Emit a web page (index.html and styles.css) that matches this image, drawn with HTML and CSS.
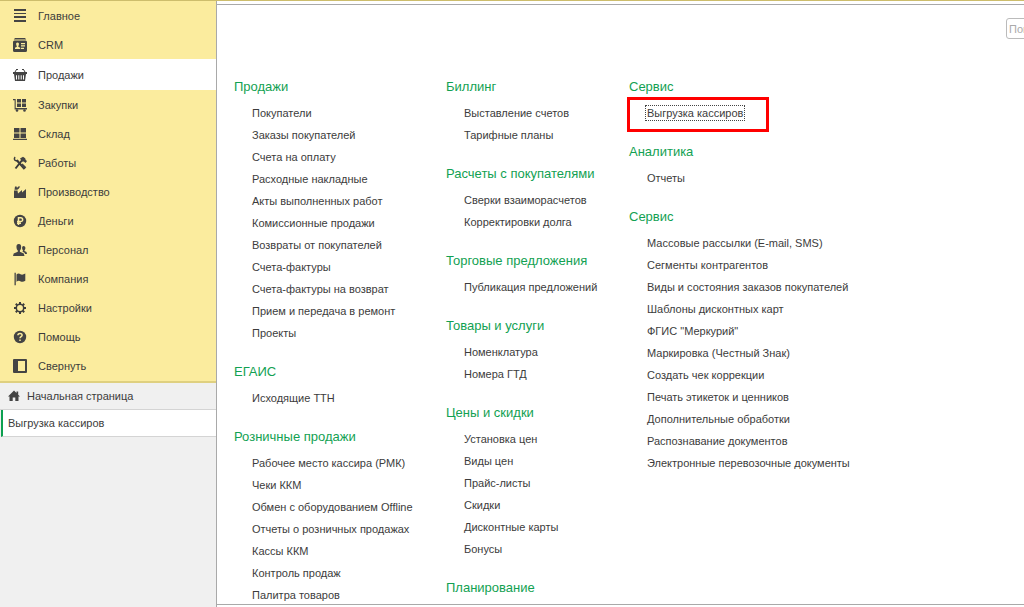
FILE: index.html
```html
<!DOCTYPE html>
<html lang="ru">
<head>
    <meta charset="UTF-8">
    <meta name="viewport" content="width=device-width, initial-scale=1.0">
    <title>Продажи</title>
    <link rel="stylesheet" href="styles.css">
</head>
<body>

    <aside class="sidebar">
        <nav class="sections">
            <a href="#" class="section">
                <svg class="icon" viewBox="0 0 14 14"><path d="M1 0h12v2H1zM1 4h12v1H1zM1 7h12v2H1zM1 11h12v2H1z"/></svg>
                Главное
            </a>
            <a href="#" class="section">
                <svg class="icon" viewBox="0 0 14 14"><path d="M2 0h10l1.200 1.600H.8z"/><path fill-rule="evenodd" d="M1.5 2.4h11Q14 2.4 14 4v8.5q0 1.5-1.5 1.5h-11Q0 14 0 12.5V4q0-1.6 1.5-1.6zM4.5 4.5C3.3 4.5 3 5.4 3.2 6.5c.1.8.4 1.200.6 1.500v.8L2 9.700V11h5.200V9.700L5.300 8.800V8c.3-.3.5-.7.6-1.500.2-1.100-.2-2-1.400-2zM8 5v1.200h4V5zM8 7.300v1.200h4V7.300zM8 9.700v1.200h3V9.700z"/></svg>
                CRM
            </a>
            <a href="#" class="section active">
                <svg class="icon" viewBox="0 0 14 14"><path d="M3.5 1.5 2 4M10.5 1.5 12 4" fill="none" stroke="currentColor"/><path d="M3 1h2v1H3zM9 1h2v1H9z"/><path d="M0 4h14v2H0z"/><path fill-rule="evenodd" d="M1 6h12l-1 7H2zM3 7.200v4.300h1V7.200zM5.300 7.200v4.300h1V7.200zM7.700 7.200v4.300h1V7.200zM10 7.200v4.300h1V7.200z"/></svg>
                Продажи
            </a>
            <a href="#" class="section">
                <svg class="icon" viewBox="0 0 14 14"><path d="M0 1h2.700v9H14v1.500H1.600V2.200H0z"/><path d="M4 1h4v3.600H4zM9 1h4v3.600H9zM4 5.500h4v3.600H4zM9 5.500h4v3.600H9z"/><circle cx="4" cy="12.5" r="1.300"/><circle cx="11.5" cy="12.5" r="1.300"/></svg>
                Закупки
            </a>
            <a href="#" class="section">
                <svg class="icon" viewBox="0 0 14 14"><path d="M1 1h5.500v4.500H1zM7.500 1H13v4.500H7.500zM1 6.400h5.500v4.500H1zM7.500 6.400H13v4.500H7.500zM0 11.700h14V13H0z"/></svg>
                Склад
            </a>
            <a href="#" class="section">
                <svg class="icon" viewBox="0 0 14 14"><path d="M4 4.500 11.500 13M10 3 2.500 12.500" fill="none" stroke="currentColor" stroke-width="2"/><path d="M2.200 1.200A2 2 0 1 0 5 4" fill="none" stroke="currentColor" stroke-width="1.5"/><path d="M7 2.500 10 .8l2.200 1.400.5 1.800L14 5l-1.500 2-1.700-1.500-1.300.3-1.300-1.600zM7.500 9l2-1.500 3.800 3.800-1.800 2z"/></svg>
                Работы
            </a>
            <a href="#" class="section">
                <svg class="icon" viewBox="0 0 14 14"><path d="M1 5.500h3.500l.5 3L9 5v2.500L13 4v9H1z"/><path d="M1.500 4.700 2 1.500h1.600L4 3l1.200-1.500h2L5.700 3.800 4.300 4.700z"/></svg>
                Производство
            </a>
            <a href="#" class="section">
                <svg class="icon" viewBox="0 0 14 14"><circle cx="7" cy="7" r="6.200"/><path class="cut" d="M5.500 11V3.700h2.200a1.900 1.900 0 0 1 0 3.900H4M4 9.300h4"/></svg>
                Деньги
            </a>
            <a href="#" class="section">
                <svg class="icon" viewBox="0 0 14 14"><path d="M5.800 1C3.800 1 3.300 2.400 3.500 4.400 3.600 6 4.200 6.800 4.800 7.500v1.300L.7 10.500 0 13h11.500l-.7-2.500-3.900-1.700V7.500C7.500 6.800 8 6 8.100 4.400 8.300 2.400 7.800 1 5.800 1z"/><path d="M10.500 3c-1.100 0-1.500 1-1.400 2.300.1 1 .4 1.600.8 2v1l-.7.300 2.300 1.200.6 1.200H14l-.5-2-2-1v-.700c.4-.4.8-1 .9-2C12.500 4 11.900 3 10.500 3z"/></svg>
                Персонал
            </a>
            <a href="#" class="section">
                <svg class="icon" viewBox="0 0 14 14"><path d="M1.500.8h1.300v12.400H1.500z"/><path d="M3.500 2.400C5 1.200 6.300 1.500 7.500 2.200s2.700.6 4.800-.7v7.300c-1.800 1.200-3.300 1.300-4.600.6s-2.700-.8-4.200.3z"/></svg>
                Компания
            </a>
            <a href="#" class="section">
                <svg class="icon" viewBox="0 0 14 14"><circle cx="7" cy="7" r="3.700" fill="none" stroke="currentColor" stroke-width="1.5"/><path d="M7 1v2M7 11v2M1 7h2M11 7h2M2.800 2.800l1.400 1.400M9.800 9.800l1.400 1.400M2.800 11.200l1.400-1.400M9.800 4.200l1.400-1.400" fill="none" stroke="currentColor" stroke-width="2"/></svg>
                Настройки
            </a>
            <a href="#" class="section">
                <svg class="icon" viewBox="0 0 14 14"><circle cx="7" cy="7" r="6.200"/><path class="cut" d="M4.900 5.300C4.900 3 9.100 3 9.100 5.200 9.100 6.600 7 6.600 7 8.300M7 9.600v1.500"/></svg>
                Помощь
            </a>
            <a href="#" class="section">
                <svg class="icon" viewBox="0 0 14 14"><path fill-rule="evenodd" d="M1 0h12q1 0 1 1v12q0 1-1 1H1q-1 0-1-1V1q0-1 1-1zM5 2v10h7V2z"/></svg>
                Свернуть
            </a>
        </nav>
        <nav class="windows">
            <a href="#" class="window home">
                <svg class="icon-home" viewBox="0 0 12 12"><path d="M6 .5 8.500 3V1.500h1.700v3.200L12 6.500h-1.500V11H7.300V7.500H4.700V11H1.500V6.500H0z"/></svg>
                Начальная страница
            </a>
            <a href="#" class="window current">Выгрузка кассиров</a>
        </nav>
    </aside>

    <main class="content">
        <form class="search">
            <input type="search" class="search-input" placeholder="Поиск (Ctrl+F)" aria-label="Поиск">
        </form>

        <div class="columns">
            <div class="column">
                <section class="group">
                    <h2>Продажи</h2>
                    <ul>
                        <li><a href="#">Покупатели</a></li>
                        <li><a href="#">Заказы покупателей</a></li>
                        <li><a href="#">Счета на оплату</a></li>
                        <li><a href="#">Расходные накладные</a></li>
                        <li><a href="#">Акты выполненных работ</a></li>
                        <li><a href="#">Комиссионные продажи</a></li>
                        <li><a href="#">Возвраты от покупателей</a></li>
                        <li><a href="#">Счета-фактуры</a></li>
                        <li><a href="#">Счета-фактуры на возврат</a></li>
                        <li><a href="#">Прием и передача в ремонт</a></li>
                        <li><a href="#">Проекты</a></li>
                    </ul>
                </section>
                <section class="group">
                    <h2>ЕГАИС</h2>
                    <ul>
                        <li><a href="#">Исходящие ТТН</a></li>
                    </ul>
                </section>
                <section class="group">
                    <h2>Розничные продажи</h2>
                    <ul>
                        <li><a href="#">Рабочее место кассира (РМК)</a></li>
                        <li><a href="#">Чеки ККМ</a></li>
                        <li><a href="#">Обмен с оборудованием Offline</a></li>
                        <li><a href="#">Отчеты о розничных продажах</a></li>
                        <li><a href="#">Кассы ККМ</a></li>
                        <li><a href="#">Контроль продаж</a></li>
                        <li><a href="#">Палитра товаров</a></li>
                    </ul>
                </section>
            </div>

            <div class="column">
                <section class="group">
                    <h2>Биллинг</h2>
                    <ul>
                        <li><a href="#">Выставление счетов</a></li>
                        <li><a href="#">Тарифные планы</a></li>
                    </ul>
                </section>
                <section class="group">
                    <h2>Расчеты с покупателями</h2>
                    <ul>
                        <li><a href="#">Сверки взаиморасчетов</a></li>
                        <li><a href="#">Корректировки долга</a></li>
                    </ul>
                </section>
                <section class="group">
                    <h2>Торговые предложения</h2>
                    <ul>
                        <li><a href="#">Публикация предложений</a></li>
                    </ul>
                </section>
                <section class="group">
                    <h2>Товары и услуги</h2>
                    <ul>
                        <li><a href="#">Номенклатура</a></li>
                        <li><a href="#">Номера ГТД</a></li>
                    </ul>
                </section>
                <section class="group">
                    <h2>Цены и скидки</h2>
                    <ul>
                        <li><a href="#">Установка цен</a></li>
                        <li><a href="#">Виды цен</a></li>
                        <li><a href="#">Прайс-листы</a></li>
                        <li><a href="#">Скидки</a></li>
                        <li><a href="#">Дисконтные карты</a></li>
                        <li><a href="#">Бонусы</a></li>
                    </ul>
                </section>
                <section class="group">
                    <h2>Планирование</h2>
                </section>
            </div>

            <div class="column">
                <section class="group">
                    <h2>Сервис</h2>
                    <ul>
                        <li class="marked"><a href="#" class="focused">Выгрузка кассиров</a></li>
                    </ul>
                </section>
                <section class="group">
                    <h2>Аналитика</h2>
                    <ul>
                        <li><a href="#">Отчеты</a></li>
                    </ul>
                </section>
                <section class="group">
                    <h2>Сервис</h2>
                    <ul>
                        <li><a href="#">Массовые рассылки (E-mail, SMS)</a></li>
                        <li><a href="#">Сегменты контрагентов</a></li>
                        <li><a href="#">Виды и состояния заказов покупателей</a></li>
                        <li><a href="#">Шаблоны дисконтных карт</a></li>
                        <li><a href="#">ФГИС "Меркурий"</a></li>
                        <li><a href="#">Маркировка (Честный Знак)</a></li>
                        <li><a href="#">Создать чек коррекции</a></li>
                        <li><a href="#">Печать этикеток и ценников</a></li>
                        <li><a href="#">Дополнительные обработки</a></li>
                        <li><a href="#">Распознавание документов</a></li>
                        <li><a href="#">Электронные перевозочные документы</a></li>
                    </ul>
                </section>
            </div>
        </div>
    </main>

</body>
</html>
```

FILE: styles.css
```css
*, *::after {
    box-sizing: border-box;
}
body {
    margin: 0;
    height: 100vh;
    display: flex;
    overflow: hidden;
    border-top: 1px solid #cdbd6c;
    font-family: "Liberation Sans", Arial, sans-serif;
    font-size: 11px;
    color: #3c3c3c;
    background-color: #fff;
}
a {
    color: inherit;
    text-decoration: none;
}
.sidebar {
    flex: 0 0 217px;
    border-right: 1px solid #a9a9a9;
    background-color: #f0f0f0;
}
.sections {
    padding-bottom: 1px;
    border-bottom: 2px solid #dfd080;
    background-color: #fbec9e;
}
.section {
    display: flex;
    align-items: center;
    gap: 11px;
    height: 29px;
    padding-left: 13px;
}
.section.active {
    height: 31px;
    background-color: #fff;
}
.icon {
    width: 14px;
    height: 14px;
    fill: #444;
}
.icon .cut {
    fill: none;
    stroke: #fbec9e;
    stroke-width: 1.5;
}
.window {
    display: flex;
    align-items: center;
    gap: 7px;
    height: 27px;
    padding-left: 8px;
    border-bottom: 1px solid #d4d4d4;
}
.window.current {
    margin-left: 1px;
    padding-left: 5px;
    background-color: #fff;
    border-left: 2px solid #0da050;
}
.icon-home {
    width: 12px;
    height: 12px;
    fill: #444;
}
.content {
    flex: 1;
    min-width: 0;
    margin: 3px 0 2px;
    overflow: hidden;
    border-top: 1px solid #a9a9a9;
    border-bottom: 1px solid #a9a9a9;
}
.search {
    display: flex;
    justify-content: flex-end;
    padding-top: 13px;
}
/* the search box runs past the right edge of the window */
.search-input {
    width: 160px;
    height: 21px;
    margin-right: -142px;
    padding: 0 2px;
    border: 1px solid #bbb;
    border-radius: 3px;
    font: inherit;
    background-color: #fff;
}
.search-input::placeholder {
    color: #aaa;
}
.columns {
    display: grid;
    grid-template-columns: 212px 183px 1fr;
    padding: 37px 0 0 17px;
}
.group h2 {
    margin: 0 0 4px;
    font-size: 13px;
    font-weight: normal;
    line-height: 22px;
    color: #12a152;
    white-space: nowrap;
}
.group ul {
    margin: 0 0 17px;
    padding-left: 18px;
    list-style: none;
}
.group li {
    line-height: 22px;
    white-space: nowrap;
}
.focused {
    outline: 1px dotted #444;
    outline-offset: 1px;
}
.marked {
    position: relative;
}
.marked::after {
    content: "";
    position: absolute;
    top: -5px;
    left: -20px;
    width: 142px;
    height: 35px;
    border: 3px solid #f00;
}
```
